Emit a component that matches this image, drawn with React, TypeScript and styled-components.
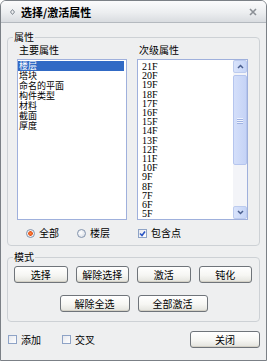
import React from "react";
import styled, { createGlobalStyle } from "styled-components";

const GlobalStyle = createGlobalStyle`
  html, body {
    margin: 0;
    padding: 0;
    background: #ffffff;
  }
  body {
    font-family: "Noto Sans CJK SC", "Liberation Sans", sans-serif;
    font-size: 10px;
    color: #000;
  }
`;

const Window = styled.div`
    width: 267px;
    height: 361px;
    box-sizing: border-box;
    border: 1px solid #7b8086;
    border-radius: 6px 6px 0 0;
    background: #eeeff0;
    display: flex;
    flex-direction: column;
    overflow: hidden;
`;

const TitleBar = styled.div`
    height: 22px;
    flex: none;
    box-sizing: border-box;
    display: flex;
    align-items: center;
    gap: 6px;
    padding: 0 9px 0 9px;
    background: linear-gradient(#fbfbfc, #eceef0 55%, #d9dce0);
    border-bottom: 1px solid #b4b9bf;
`;

const Title = styled.span`
    font-size: 11px;
    font-weight: bold;
    line-height: 12px;
`;

const CloseIcon = styled.svg`
    margin-left: auto;
`;

const Body = styled.div`
    flex: 1;
    display: flex;
    flex-direction: column;
    padding: 8px 6px 0 6px;
`;

const Group = styled.fieldset<{ $gap?: number }>`
    margin: ${(p) => p.$gap ?? 0}px 0 0 0;
    padding: 0;
    min-width: 0;
    border: 1px solid #cdd1d5;
    border-radius: 4px;
`;

const GroupLegend = styled.legend`
    margin-left: 5px;
    padding: 0 1px;
    font-size: 10px;
    line-height: 12px;
`;

const Columns = styled.div`
    display: grid;
    grid-template-columns: 110px 111px;
    column-gap: 10px;
    padding: 1px 11px 6px 9px;
`;

const Column = styled.div`
    display: flex;
    flex-direction: column;
`;

const ColumnLabel = styled.div`
    line-height: 12px;
    padding-left: 2px;
`;

const ListBox = styled.div`
    margin-top: 3px;
    height: 161px;
    box-sizing: border-box;
    border: 1px solid #9fb0dc;
    background: #ffffff;
    display: flex;
    overflow: hidden;
`;

const Items = styled.div<{ $serif?: boolean }>`
    flex: 1;
    display: flex;
    flex-direction: column;
    padding: ${(p) => (p.$serif ? "2px 0 0 3px" : "1px 2px 0 0")};
    font-family: ${(p) =>
        p.$serif
            ? '"Liberation Serif", "Noto Sans CJK SC", serif'
            : '"Noto Sans CJK SC", sans-serif'};
    font-size: ${(p) => (p.$serif ? 10 : 9)}px;
    line-height: ${(p) => (p.$serif ? 9.2 : 10)}px;
`;

const Item = styled.div<{ $selected?: boolean }>`
    flex: none;
    padding-left: 1px;
    white-space: nowrap;
    background: ${(p) => (p.$selected ? "#316ac5" : "transparent")};
    color: ${(p) => (p.$selected ? "#ffffff" : "#000000")};
`;

const ScrollBar = styled.div`
    width: 14px;
    flex: none;
    display: flex;
    flex-direction: column;
    background: #f3f4f8;
`;

const ArrowButton = styled.div`
    height: 13px;
    flex: none;
    box-sizing: border-box;
    border: 1px solid #bccbee;
    border-radius: 2px;
    background: linear-gradient(90deg, #d9e3fb, #c6d5f7);
    display: flex;
    align-items: center;
    justify-content: center;
`;

const Track = styled.div`
    flex: 1;
    padding-top: 2px;
`;

const Thumb = styled.div`
    height: 90px;
    box-sizing: border-box;
    border: 1px solid #b5c5ee;
    border-radius: 2px;
    background: linear-gradient(90deg, #d4dffa, #c5d3f6);
    display: flex;
    flex-direction: column;
    align-items: center;
    justify-content: center;
    gap: 1px;
`;

const Grip = styled.div`
    width: 6px;
    height: 1px;
    background: #eef2fd;
    box-shadow: 0 1px 0 #9fb2e2;
`;

const OptionRow = styled.div<{ $indent: number }>`
    margin-top: 7px;
    height: 12px;
    display: flex;
    align-items: center;
    padding-left: ${(p) => p.$indent}px;
    gap: 18px;
`;

const Option = styled.label`
    display: flex;
    align-items: center;
    gap: 4px;
    line-height: 12px;
`;

const RadioDot = styled.span<{ $on?: boolean }>`
    width: 9px;
    height: 9px;
    box-sizing: border-box;
    border-radius: 50%;
    border: 1px solid #8394ad;
    background: ${(p) =>
        p.$on
            ? "radial-gradient(circle, #ff8a3c 0, #e4521b 2px, #f4f4f4 2.6px, #d5dae2 100%)"
            : "radial-gradient(circle at 40% 40%, #ffffff 0, #dfe3ea 70%, #c7cdd8 100%)"};
`;

const CheckBox = styled.span`
    width: 9px;
    height: 9px;
    box-sizing: border-box;
    border: 1px solid #8ea3c6;
    background: linear-gradient(135deg, #e6e8ee, #ffffff);
    display: flex;
    align-items: center;
    justify-content: center;
`;

const ButtonGrid = styled.div`
    display: grid;
    grid-template-columns: repeat(4, 1fr);
    column-gap: 8px;
    padding: 3px 7px 0 6px;
`;

const ButtonRow = styled.div`
    display: flex;
    justify-content: center;
    gap: 8px;
    padding: 12px 0 9px 0;
`;

const Button = styled.button<{ $width?: number; $push?: boolean }>`
    height: 17px;
    width: ${(p) => (p.$width ? `${p.$width}px` : "auto")};
    margin-left: ${(p) => (p.$push ? "auto" : "0")};
    padding: 0;
    font-family: inherit;
    font-size: 10px;
    line-height: 12px;
    color: #000;
    border: 1px solid #6f747a;
    border-radius: 3px;
    background: linear-gradient(#ffffff, #f6f6f3 55%, #e3e3dd);
    box-shadow: inset 0 -1px 0 #d4d1c6;
`;

const Footer = styled.div`
    margin-top: 9px;
    display: flex;
    align-items: center;
    padding-left: 1px;
    gap: 21px;
`;

const primary = ["楼层", "塔块", "命名的平面", "构件类型", "材料", "截面", "厚度"];
const floors = Array.from({ length: 17 }, (_, i) => `${21 - i}F`);

const Chevron = ({ down }: { down?: boolean }) => (
    <svg width="7" height="5" viewBox="0 0 7 5">
        <polyline
            points={down ? "1,1 3.5,3.5 6,1" : "1,4 3.5,1.5 6,4"}
            fill="none"
            stroke="#4a5f8e"
            strokeWidth="1.5"
        />
    </svg>
);

const Tick = () => (
    <svg width="7" height="7" viewBox="0 0 7 7">
        <polyline points="1,3.5 3,5.5 6,1.5" fill="none" stroke="#2a55c4" strokeWidth="1.6" />
    </svg>
);

export default function App() {
    return (
        <>
            <GlobalStyle />
            <Window>
                <TitleBar>
                    <svg width="5" height="6" viewBox="0 0 5 6">
                        <path d="M2.5 0.5 L4.5 3 L2.5 5.5 L0.5 3 Z" fill="none" stroke="#808890" strokeWidth="1" />
                    </svg>
                    <Title>选择/激活属性</Title>
                    <CloseIcon width="8" height="8" viewBox="0 0 8 8">
                        <path d="M1 1 L7 7 M7 1 L1 7" stroke="#8c9096" strokeWidth="1.6" />
                    </CloseIcon>
                </TitleBar>
                <Body>
                    <Group>
                        <GroupLegend>属性</GroupLegend>
                        <Columns>
                            <Column>
                                <ColumnLabel>主要属性</ColumnLabel>
                                <ListBox>
                                    <Items>
                                        {primary.map((p, i) => (
                                            <Item key={p} $selected={i === 0}>
                                                {p}
                                            </Item>
                                        ))}
                                    </Items>
                                </ListBox>
                                <OptionRow $indent={9}>
                                    <Option>
                                        <RadioDot $on />
                                        全部
                                    </Option>
                                    <Option>
                                        <RadioDot />
                                        楼层
                                    </Option>
                                </OptionRow>
                            </Column>
                            <Column>
                                <ColumnLabel>次级属性</ColumnLabel>
                                <ListBox>
                                    <Items $serif>
                                        {floors.map((f) => (
                                            <Item key={f}>{f}</Item>
                                        ))}
                                    </Items>
                                    <ScrollBar>
                                        <ArrowButton>
                                            <Chevron />
                                        </ArrowButton>
                                        <Track>
                                            <Thumb>
                                                <Grip />
                                                <Grip />
                                                <Grip />
                                            </Thumb>
                                        </Track>
                                        <ArrowButton>
                                            <Chevron down />
                                        </ArrowButton>
                                    </ScrollBar>
                                </ListBox>
                                <OptionRow $indent={1}>
                                    <Option>
                                        <CheckBox>
                                            <Tick />
                                        </CheckBox>
                                        包含点
                                    </Option>
                                </OptionRow>
                            </Column>
                        </Columns>
                    </Group>
                    <Group $gap={5}>
                        <GroupLegend>模式</GroupLegend>
                        <ButtonGrid>
                            <Button>选择</Button>
                            <Button>解除选择</Button>
                            <Button>激活</Button>
                            <Button>钝化</Button>
                        </ButtonGrid>
                        <ButtonRow>
                            <Button $width={70}>解除全选</Button>
                            <Button $width={70}>全部激活</Button>
                        </ButtonRow>
                    </Group>
                    <Footer>
                        <Option>
                            <CheckBox />
                            添加
                        </Option>
                        <Option>
                            <CheckBox />
                            交叉
                        </Option>
                        <Button $width={70} $push>
                            关闭
                        </Button>
                    </Footer>
                </Body>
            </Window>
        </>
    );
}
